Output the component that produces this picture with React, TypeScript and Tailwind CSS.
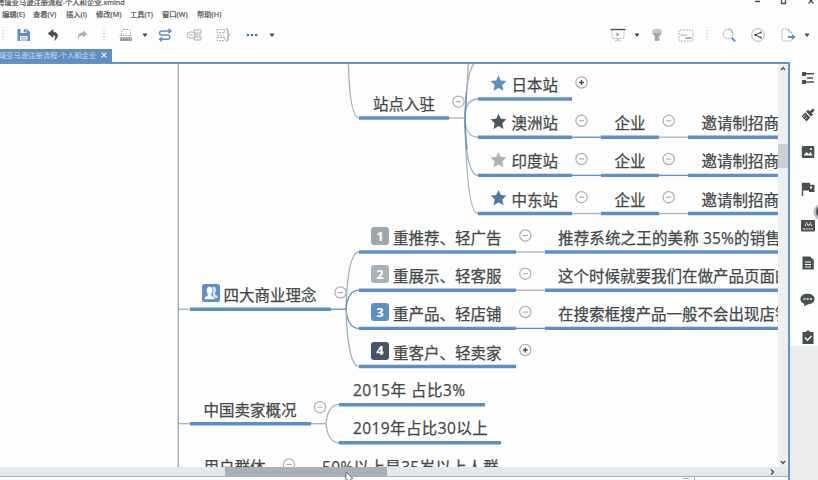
import React from "react";

const BLUE = "#5b8fc6";
const GRAY = "#a8b0b8";
const DARK = "#4a4f4f";

type IconProps = { w: number; h?: number; className?: string; children: React.ReactNode };

function Icon({ w, h = 14, className = "", children }: IconProps) {
  return (
    <svg width={w} height={h} viewBox={`0 0 ${w} ${h}`} fill="none" className={`block shrink-0 ${className}`}>
      {children}
    </svg>
  );
}

function Separator({ className = "" }: { className?: string }) {
  return (
    <Icon w={2} className={className}>
      <path d="M1 2v11" stroke={GRAY} strokeDasharray="1 2" />
    </Icon>
  );
}

function Caret({ className = "" }: { className?: string }) {
  return (
    <Icon w={4} className={className}>
      <path d="M0 5.500h4v1L2 9 0 6.500z" fill={DARK} />
    </Icon>
  );
}

function Toolbar() {
  return (
    <div className="flex h-[27px] shrink-0 items-center pl-0.5">
      <Separator />
      <Icon w={13} className="ml-[13px]">
        <path d="M.5 1h9.500L13 4v9H.5z" fill={BLUE} />
        <path d="M3.500 1h6v4h-6zM3 8h7.500v4.500H3z" fill="#fdfdfd" />
        <path d="M7 1.500h1.500v2.500H7zM4 9.500h5.500M4 11.300h5.500" fill={BLUE} stroke={BLUE} strokeWidth=".7" />
      </Icon>
      <Icon w={11} className="ml-[18px]">
        <path d="M5 1.500 0 5.500l5 4V7c2.500 0 3 2 1.500 5.500C11 9 10.500 4 5 4z" fill={DARK} stroke={DARK} strokeWidth=".5" />
      </Icon>
      <Icon w={11} className="ml-[18px]">
        <path d="M6 2.500 10.500 6 6 9.500V7.500C3 7 1.500 9 1.500 12-.5 8 2 4.500 6 4.500z" fill={GRAY} />
      </Icon>
      <Separator className="ml-[15px]" />
      <Icon w={14} className="ml-[14px]">
        <path d="M2.500 7V4c0-1.500 1-2.500 2.500-2.500h4C10.500 1.500 11.500 2.500 11.500 4v3M.5 7.500h13" stroke={GRAY} strokeDasharray="2 1" />
        <path d="M1 9h12v4H1z" fill={GRAY} />
        <path d="M2 12h10" stroke={DARK} strokeWidth=".8" strokeDasharray="1 1" />
      </Icon>
      <Caret className="ml-[10px]" />
      <Icon w={14} className="ml-[11px]">
        <path d="M13 3H4a2.500 2 0 0 0 0 4h6a2.500 2.200 0 0 1 0 4.300H2M10.500.8 13 3l-2.500 2.200M4 9.200 1.500 11.300 4 13.500" stroke={BLUE} strokeWidth="1.400" />
      </Icon>
      <Icon w={16} className="ml-[14px]">
        <path d="M8 2h7v3H8zM8 9h7v3H8zM8 7h7" stroke={GRAY} />
        <rect x="1" y="4" width="8" height="6" rx="3" fill="#fdfdfd" stroke={GRAY} />
        <path d="M3 7h4" stroke={GRAY} />
      </Icon>
      <Icon w={14} className="ml-[14px]">
        <path d="M1 1.500h8v3H1zM1 9.500h8v3H1zM1 7h7" stroke={GRAY} strokeDasharray="2 1" />
        <path d="M10 .8c3 0 1.500 4 2 5l1.500 1.200L12 8.200c-.5 1 1 5-2 5" stroke={GRAY} strokeWidth="1.400" />
      </Icon>
      <Icon w={12} className="ml-[16px]">
        <circle cx="1.900" cy="7" r="1.300" fill="#456f9d" />
        <circle cx="6" cy="7" r="1.300" fill="#456f9d" />
        <circle cx="10.200" cy="7" r="1.300" fill="#456f9d" />
      </Icon>
      <Caret className="ml-[12px]" />

      <Icon w={16} className="ml-[336px]">
        <path d="M.5 1.500h15" stroke={DARK} strokeWidth="1.400" />
        <path d="M2 2.500V9c0 1 .5 1.500 1.500 1.500h9c1 0 1.500-.5 1.500-1.500V2.500M8 10.500V12M5 13.300l3-1.300 3 1.300" stroke={GRAY} strokeDasharray="2 .8" />
        <path d="m6.300 4.300 4 2.200-4 2.300z" fill={GRAY} />
      </Icon>
      <Caret className="ml-[9px]" />
      <Icon w={12} className="ml-[12px]">
        <path d="M2 6C-.5 2.500 3 .5 6 .5S12.500 2.500 10 6c-1 1-1.500 2-1.800 3H3.800C3.500 8 3 7 2 6z" fill="#c3c9ce" />
        <path d="M1 5h10L8.400 8.500V13H3.700V8.500z" fill={GRAY} />
        <path d="M3.500 6h5M5 8.500h2.500M4.500 11h3" stroke={DARK} strokeWidth=".7" strokeDasharray="1 1.500" />
      </Icon>
      <Icon w={16} className="ml-[15px]">
        <rect x="1" y="2" width="14" height="11" rx="1" stroke={GRAY} strokeDasharray="2 1" />
        <path d="M2 7h7" stroke={GRAY} />
        <path d="M7.500 10h6" stroke={BLUE} strokeWidth="1.300" />
      </Icon>
      <Separator className="ml-[12px]" />
      <Icon w={14} className="ml-[14px]">
        <circle cx="6" cy="6" r="4.800" stroke={GRAY} strokeDasharray="2 .7" />
        <path d="M6.500 1.200C9 1.500 10.500 3 10.500 5" stroke={GRAY} strokeWidth="1.300" />
        <path d="m9.700 9.700 3.500 3.500" stroke={BLUE} strokeWidth="2" />
      </Icon>
      <Icon w={14} className="ml-[15px]">
        <circle cx="7" cy="7" r="6.300" stroke={GRAY} />
        <path d="M9.500 4.500 4.500 7l5 2.500" stroke={DARK} />
        <circle cx="9.700" cy="4.500" r="1.100" fill={DARK} />
        <circle cx="4.300" cy="7" r="1.100" fill={DARK} />
        <circle cx="9.700" cy="9.500" r="1.100" fill={DARK} />
      </Icon>
      <Icon w={15} className="ml-[16px]">
        <path d="M10.500 6V4L7.500 1H2.500C1.500 1 1 1.500 1 2.500v9c0 1 .5 1.500 1.500 1.500H9c1 0 1.500-.5 1.500-1.500M7.500 1v3h3" stroke={GRAY} strokeDasharray="2 .7" />
        <path d="M7 8h4V6l3.700 3-3.700 3v-2H7z" fill={BLUE} />
      </Icon>
      <Caret className="ml-[9px]" />
    </div>
  );
}

const underlines: [number, number, number][] = [
  [359, 449, 118], [478, 572, 99], [478, 572, 137.200], [478, 572, 175.400], [478, 572, 213.500],
  [601, 659, 137.200], [601, 659, 175.400], [601, 659, 213.500],
  [688, 778, 137.200], [688, 778, 175.400], [688, 778, 213.500],
  [359, 516, 252], [359, 516, 290.200], [359, 516, 328.400], [359, 516, 366.500],
  [545, 778, 252], [545, 778, 290.200], [545, 778, 328.400],
  [190, 331, 309.200], [190, 311, 423.700], [339, 485, 404.700], [339, 501, 442.800],
];

const connectors: [number, number, number, string][] = [
  [449, 465, 118, GRAY],
  [572, 601, 137.200, BLUE], [659, 688, 137.200, GRAY],
  [572, 601, 175.400, BLUE], [659, 688, 175.400, BLUE],
  [572, 601, 213.500, GRAY], [659, 688, 213.500, GRAY],
  [516, 545, 252, GRAY], [516, 545, 290.200, GRAY], [516, 545, 328.400, BLUE],
  [178, 190, 309.200, GRAY], [331, 346, 309.200, BLUE],
  [178, 190, 423.700, GRAY], [311, 326, 423.700, GRAY],
];

const curves: [string, string][] = [
  ["M348.300 60C349 90 351.500 118 359 118", GRAY],
  ["M465 118C465 106 469 99 478 99", GRAY],
  ["M465 118C465 129 469 137.200 478 137.200", GRAY],
  ["M465 118C465 150 469 175.400 478 175.400", GRAY],
  ["M465 118C466 176 470 213.500 478 213.500", GRAY],
  ["M465 118C465.500 92 468 70 475 62", GRAY],
  ["M465 118C466 98 468 80 468.300 60", GRAY],
  ["M465 128C464.800 116 465.200 108 466.500 92M465 118C465.300 130 466 142 467 149", BLUE],
  ["M346 309.200C347 276 351 252 359 252", GRAY],
  ["M346 309.200C347 298 351 290.200 359 290.200", BLUE],
  ["M346 309.200C347 320 351 328.400 359 328.400", BLUE],
  ["M346 309.200C347 342 351 366.500 359 366.500", GRAY],
  ["M326 423.700C327 413 331 404.700 339 404.700", GRAY],
  ["M326 423.700C327 434 331 442.800 339 442.800", GRAY],
];

const toggles: [number, number, boolean][] = [
  [458.500, 101.700, false], [581.500, 82.500, true],
  [581.500, 120.800, false], [581.500, 159, false], [581.500, 197.200, false],
  [668.700, 120.800, false], [668.700, 159, false], [668.700, 197.200, false],
  [525.300, 235.500, false], [525.300, 273.700, false], [525.300, 312, false], [525.300, 350, true],
  [340.500, 292.500, false], [320, 407.200, false], [289, 464.500, false],
];

/* x, vertical centre, text, letter spacing */
const labels: [number, number, string, number?][] = [
  [373, 104, "站点入驻"],
  [511.500, 85, "日本站"], [511.500, 123.200, "澳洲站"], [511.500, 161.400, "印度站"], [511.500, 199.500, "中东站"],
  [614.500, 123.200, "企业"], [614.500, 161.400, "企业"], [614.500, 199.500, "企业"],
  [701.500, 123.200, "邀请制招商"], [701.500, 161.400, "邀请制招商"], [701.500, 199.500, "邀请制招商"],
  [393, 238, "重推荐、轻广告"], [393, 276.200, "重展示、轻客服"], [393, 314.400, "重产品、轻店铺"], [393, 352.500, "重客户、轻卖家"],
  [558, 238, "推荐系统之王的美称 35%的销售", 0.15],
  [558, 276.200, "这个时候就要我们在做产品页面的"],
  [558, 314.400, "在搜索框搜产品一般不会出现店铺"],
  [223.500, 295.200, "四大商业理念"],
  [203.500, 409.800, "中国卖家概况"],
  [353, 390.200, "2015年 占比3%", 0.5],
  [353, 428.300, "2019年占比30以上", 0.4],
  [203.500, 466.500, "用户群体"],
  [322, 466.500, "50%以上是35岁以上人群", 0.35],
];

const stars: [number, string][] = [[83.500, BLUE], [121.700, "#4b5661"], [160, GRAY], [198, "#4f7aa8"]];
const priorities: [number, string, string][] = [
  [236, "1", "#9fa7ae"], [274.200, "2", "#a9b1b8"], [312.400, "3", BLUE], [350.500, "4", "#465667"],
];

function Canvas() {
  return (
    <div className="relative min-w-0 flex-1 overflow-hidden">
      <svg className="absolute left-0 top-0" width="778" height="403" viewBox="0 64 778 403" fill="none">
        <path d="M178.300 64v403" stroke={GRAY} strokeWidth="1.600" />
        {curves.map(([d, c]) => <path key={d} d={d} stroke={c} strokeWidth="1.300" />)}
        {connectors.map(([a, b, y, c]) => <path key={`${a}-${y}`} d={`M${a} ${y}H${b}`} stroke={c} strokeWidth="1.300" />)}
        {underlines.map(([a, b, y]) => (
          <path key={`${a}-${y}`} d={`M${a} ${y}H${b}`} stroke={BLUE} strokeWidth="3.400" />
        ))}
        {toggles.map(([x, y, plus]) => (
          <g key={`${x}-${y}`}>
            <circle cx={x} cy={y} r="5.600" fill="#fdfdfd" stroke={GRAY} strokeWidth="1.200" />
            <path
              d={plus ? `M${x - 2.500} ${y}h5M${x} ${y - 2.500}v5` : `M${x - 2.500} ${y}h5`}
              stroke={plus ? DARK : "#97a3ae"}
              strokeWidth={plus ? 1.500 : 1}
            />
          </g>
        ))}
        {stars.map(([y, c]) => (
          <path
            key={y}
            transform={`translate(498.500 ${y})`}
            d="M0-8 2.300-2.900 7.900-2.400 3.800 1.500 5 7.200 0 4.400-5 7.200-3.800 1.500-7.900-2.400-2.300-2.900z"
            fill={c}
          />
        ))}
        <rect x="202" y="284" width="18" height="18" rx="2.500" fill={BLUE} />
        <path d="M212.500 287c2-.8 4 .5 3.500 3.500-.3 2-1.500 2.500-1 3.500.5.800 3 1.200 3 4h-5z" fill="#d4e0ed" />
        <path d="M204 299.500c0-3 3.500-3.500 3.800-4.500.2-1-1.300-1.500-1.500-4-.2-3 1-4.500 3.200-4.500s3.500 1.500 3.200 4.500c-.2 2.500-1.600 3-1.500 4 .2 1 3.800 1.500 3.800 4.500z" fill="#fdfdfd" stroke={BLUE} strokeWidth=".6" />
      </svg>
      {priorities.map(([y, n, c]) => (
        <span
          key={n}
          className="absolute left-[371px] flex h-[18px] w-[18px] items-center justify-center rounded-[3px] font-['Open_Sans'] text-[13px] font-bold leading-none text-[#fdfdfd]"
          style={{ top: y - 73, backgroundColor: c }}
        >
          {n}
        </span>
      ))}
      {labels.map(([x, y, t, spacing = 0]) => (
        <span
          key={`${x}-${y}`}
          className="absolute whitespace-pre text-[15.5px] leading-[20px] text-[#434848] [-webkit-text-stroke:0.25px_#434848]"
          style={{ left: x, top: y - 74, letterSpacing: spacing }}
        >
          {t}
        </span>
      ))}
    </div>
  );
}

function Sidebar() {
  return (
    <aside className="flex w-7 shrink-0 flex-col bg-[#fdfdfd]">
      <div className="flex h-[284px] flex-col items-center gap-[23px] pl-[7px] pt-[9px]">
        <Icon w={14}>
          <path d="M1 1h4v4H1zM1 9h4v4H1z" fill={DARK} />
          <path d="M5 2.800h8M5 11h8M6 7h6" stroke={DARK} strokeWidth="1.500" />
        </Icon>
        <Icon w={14}>
          <path d="m12 .5 1.700 1.700-3 3L12 6.500l-2 2L5 3.800l2-2 1.700 1.500zM4.300 4.500l5 5L5.500 13.500.5 8.200z" fill={DARK} />
          <path d="m2 9 2.500-2M4 11l2-2" stroke="#fdfdfd" strokeWidth=".7" />
        </Icon>
        <Icon w={14}>
          <rect x=".8" y="1" width="12.500" height="12" rx="1" fill={DARK} />
          <path d="m2.500 10.500 3-3.500 2 2 2-2 2.200 3.500z" fill="#fdfdfd" />
          <circle cx="10" cy="4" r="1" fill="#fdfdfd" />
        </Icon>
        <Icon w={14}>
          <path d="M.8.800H9v2h4.500V10H8V8.500H2.200V14H.8z" fill={DARK} />
          <path d="M9 4.500h2v2H9z" fill="#fdfdfd" />
        </Icon>
        <Icon w={14}>
          <rect x="0" y="1" width="14" height="11.500" rx="1" fill={DARK} />
          <path d="m4 7 1.700-3.500L7.500 7l2-3.500L10.500 7M2 10h10" stroke="#fdfdfd" strokeDasharray="2 .7" />
        </Icon>
        <Icon w={14}>
          <path d="M1.500.5h7.500L12.800 4v9.500H1.500z" fill={DARK} />
          <path d="M4 6h6M4 8.500h6M4 11h6" stroke="#fdfdfd" />
        </Icon>
        <Icon w={15}>
          <path d="M7.500.8c4 0 7 2 7 5.200s-3 5-6 5.200c-1.500.1-3 1.800-4.500 2l.3-2.400C1.500 10 .5 8.200.5 6c0-3.200 3-5.200 7-5.200z" fill={DARK} />
          <path d="M3.500 6h2M6.700 6h2M9.900 6h2" stroke="#fdfdfd" strokeWidth="1.700" />
        </Icon>
        <Icon w={14}>
          <path d="M1.500 2h3L7 .2 9.500 2h3v12h-11z" fill={DARK} />
          <path d="m4 7.500 2.500 2.800L10.500 6" stroke="#fdfdfd" strokeWidth="1.300" />
        </Icon>
      </div>
      <div className="flex-1 bg-[#eaecee]" />
    </aside>
  );
}

export default function App() {
  return (
    <div className="relative flex h-[480px] w-[818px] flex-col overflow-hidden bg-[#fdfdfd] font-['Open_Sans','Noto_Sans_CJK_SC',sans-serif] text-[#4a4f4f]">
      <header className="flex h-[8px] shrink-0 items-center justify-between">
        <span className="-ml-[3px] -mt-[4px] whitespace-nowrap text-[7.3px] leading-[10px] [-webkit-text-stroke:0.2px_#4a4f4f]">跨境亚马逊注册流程-个人和企业.xmind</span>
        <svg width="66" height="8" viewBox="0 0 66 8" fill="none" stroke={DARK} className="shrink-0">
          <path d="M3 1.500h5M29.500 0v3.500h4V0M56.500 3.500 61.500-1.500M61.500 3.500l-5-5" strokeWidth="1.300" />
        </svg>
      </header>
      <nav className="flex h-[13px] shrink-0 items-center whitespace-nowrap text-[7.3px] leading-none [-webkit-text-stroke:0.2px_#4a4f4f]">
        <span className="ml-0.5 w-[31px]">编辑(E)</span>
        <span className="w-[33px]">查看(V)</span>
        <span className="w-[30px]">插入(I)</span>
        <span className="w-[34px]">修改(M)</span>
        <span className="w-[32px]">工具(T)</span>
        <span className="w-[35px]">窗口(W)</span>
        <span>帮助(H)</span>
      </nav>
      <Toolbar />
      <div className="flex h-[14px] shrink-0 items-end">
        <div className="flex h-[13px] w-[112px] items-center overflow-hidden bg-[#5b8fc6] text-[#d3dbe3]">
          <span className="-ml-[1px] w-[102px] shrink-0 whitespace-nowrap text-[7.3px] leading-none">境亚马逊注册流程-个人和企业</span>
          <svg width="6" height="6" viewBox="0 0 6 6" stroke="#fdfdfd" strokeWidth="1.100" className="-mt-px">
            <path d="m.7.700 4.600 4.600m0-4.600L.7 5.300" />
          </svg>
        </div>
      </div>
      <div className="flex min-h-0 flex-1">
        <section className="flex w-[790px] shrink-0 flex-col border-r-2 border-t-2 border-[#6493c5]">
          <div className="flex h-[403px] shrink-0">
            <Canvas />
            <div className="flex w-[10px] shrink-0 flex-col items-center bg-[#edeff0]">
              <Icon w={6} h={8}><path d="m1 6 2-2.500L5 6" stroke={DARK} strokeWidth="1.300" /></Icon>
              <div className="mt-[72px] h-[24px] w-full bg-[#cbd0d4]" />
              <Icon w={6} h={8} className="mt-auto"><path d="m1 2 2 2.500L5 2" stroke={DARK} strokeWidth="1.300" /></Icon>
            </div>
          </div>
          <div className="flex h-[10px] shrink-0 items-center border-b border-[#a8b0b8] bg-[#e5e8ea]">
            <div className="ml-[225px] h-full w-[162px] bg-[#a8b0b8]" />
            <Icon w={6} h={8} className="ml-[382px]"><path d="m2 1.500 2.500 2.500L2 6.500" stroke={DARK} strokeWidth="1.300" /></Icon>
          </div>
          <div className="flex h-[3px] items-center pl-[683px]">
            <span className="h-px w-[6px] bg-[#a8b0b8]" />
            <span className="ml-[5px] h-[3px] w-px bg-[#a8b0b8]" />
          </div>
        </section>
        <Sidebar />
      </div>
      <svg className="absolute left-[345px] top-[472px]" width="9" height="8" viewBox="0 0 9 8">
        <path d="M1 0 8 6.500 5.500 7 7 10 4 10 3 7.500 1 9z" fill="#fdfdfd" stroke={DARK} strokeWidth=".8" />
      </svg>
      <svg className="absolute left-[813px] top-[203px]" width="5" height="18" viewBox="0 0 5 18">
        <circle cx="9" cy="9" r="8.500" fill="#b7bec4" />
        <path d="M5 4C2.500 5 2.500 12 5 13z" fill={DARK} />
      </svg>
    </div>
  );
}
